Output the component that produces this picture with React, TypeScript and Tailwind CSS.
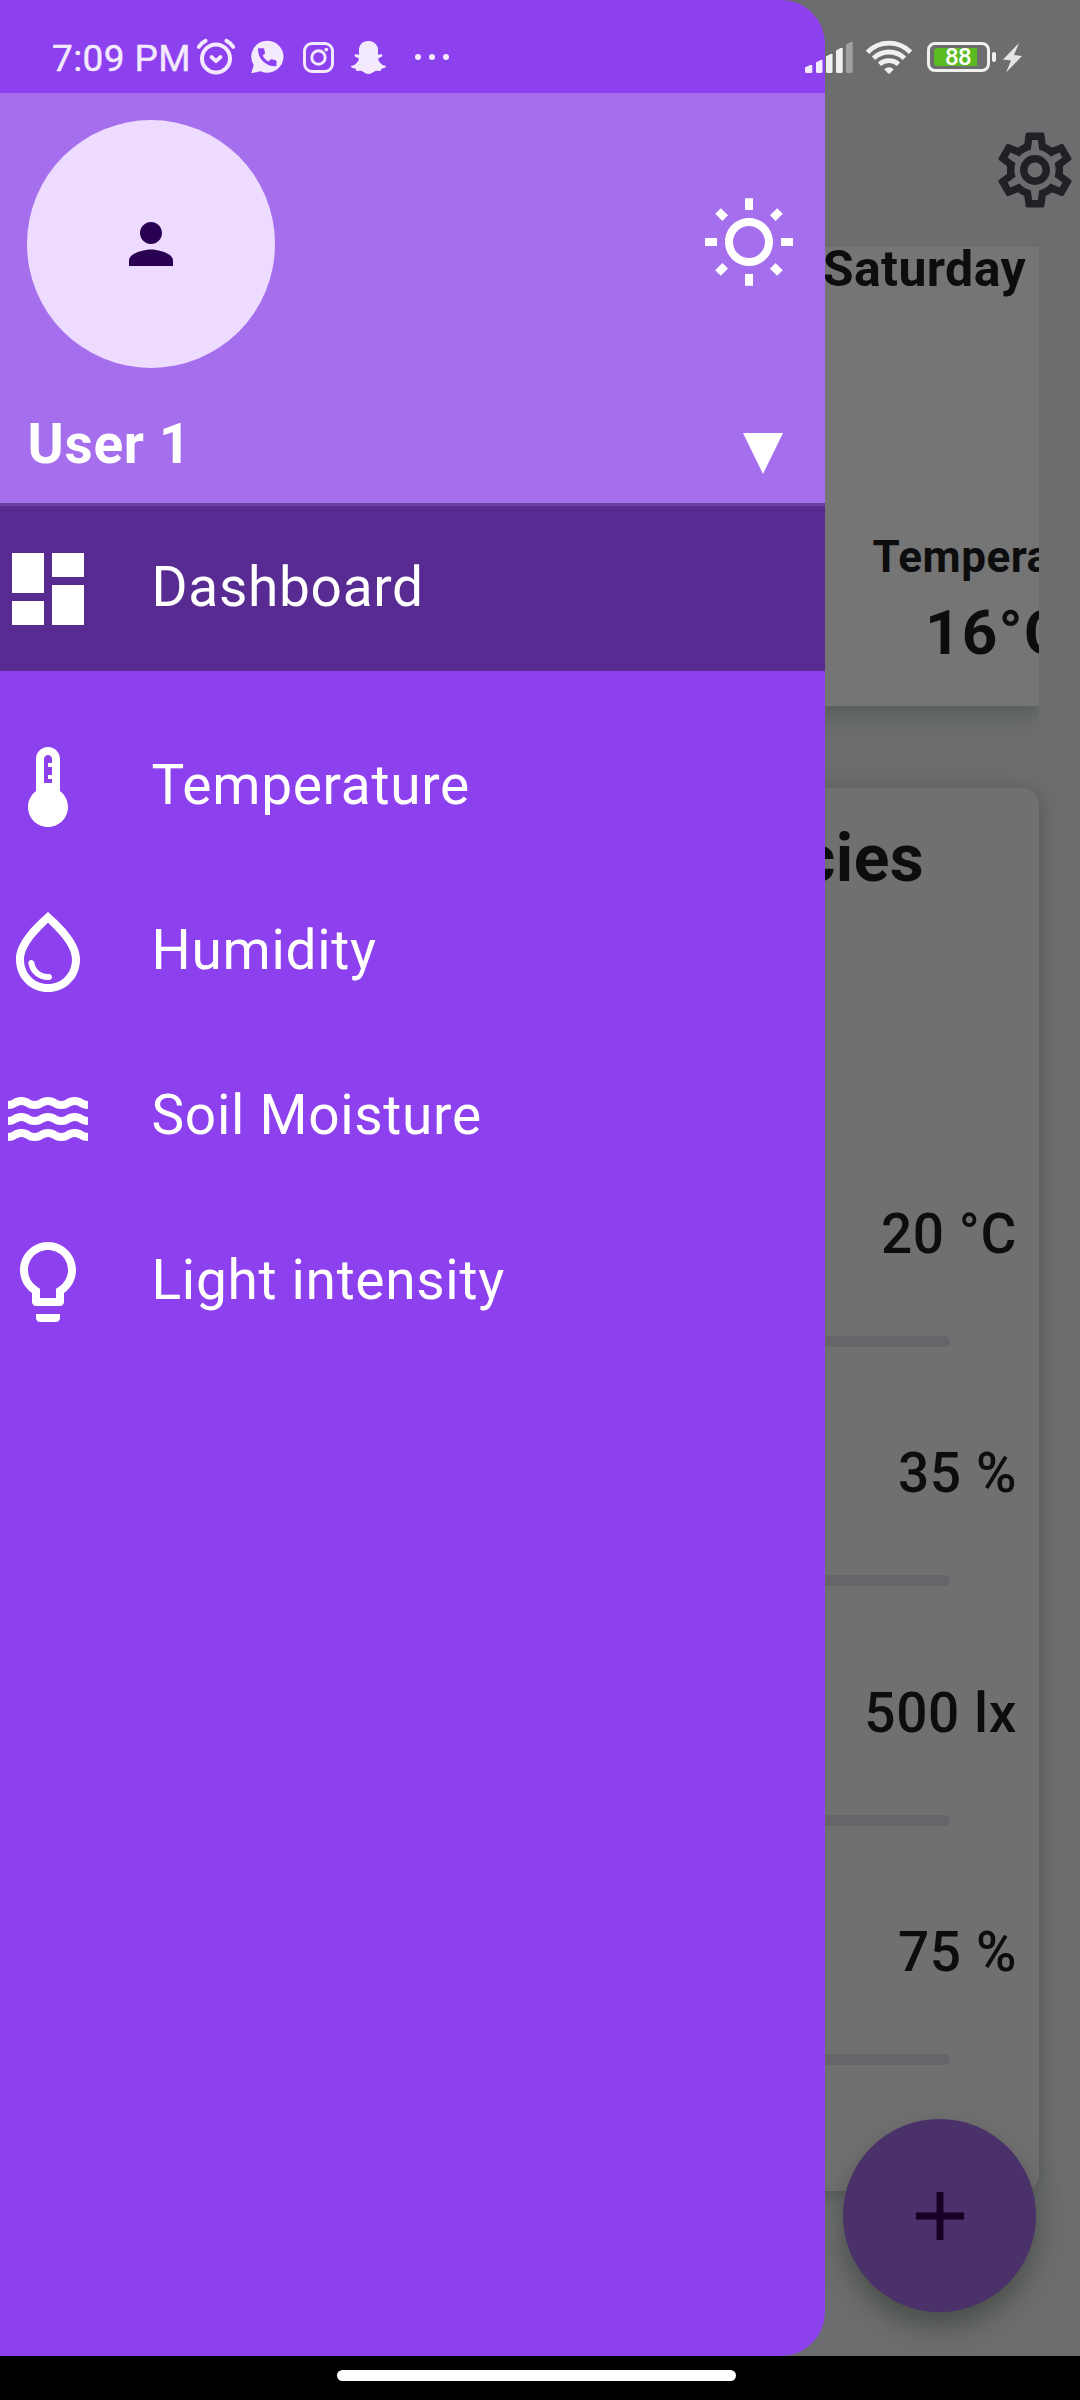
import React from "react";
import {
  MdDashboard,
  MdThermostat,
  MdOutlineWaterDrop,
  MdWater,
  MdOutlineLightbulb,
  MdOutlineWbSunny,
  MdPerson,
} from "react-icons/md";
import { FaSnapchatGhost } from "react-icons/fa";
import type { IconType } from "react-icons";

const COG =
  "M12,8A4,4 0 0,1 16,12A4,4 0 0,1 12,16A4,4 0 0,1 8,12A4,4 0 0,1 12,8M12,10A2,2 0 0,0 10,12A2,2 0 0,0 12,14A2,2 0 0,0 14,12A2,2 0 0,0 12,10M10,22C9.75,22 9.54,21.82 9.5,21.58L9.13,18.93C8.5,18.68 7.96,18.34 7.44,17.94L4.95,18.95C4.73,19.03 4.46,18.95 4.34,18.73L2.34,15.27C2.21,15.05 2.27,14.78 2.46,14.63L4.57,12.97L4.5,12L4.57,11L2.46,9.37C2.27,9.22 2.21,8.95 2.34,8.73L4.34,5.27C4.46,5.05 4.73,4.96 4.95,5.05L7.44,6.05C7.96,5.66 8.5,5.32 9.13,5.07L9.5,2.42C9.54,2.18 9.75,2 10,2H14C14.25,2 14.46,2.18 14.5,2.42L14.87,5.07C15.5,5.32 16.04,5.66 16.56,6.05L19.05,5.05C19.27,4.96 19.54,5.05 19.66,5.27L21.66,8.73C21.79,8.95 21.73,9.22 21.54,9.37L19.43,11L19.5,12L19.43,13L21.54,14.63C21.73,14.78 21.79,15.05 21.66,15.27L19.66,18.73C19.54,18.95 19.27,19.04 19.05,18.95L16.56,17.95C16.04,18.34 15.5,18.68 14.87,18.93L14.5,21.58C14.46,21.82 14.25,22 14,22H10M11.25,4L10.88,6.61C9.68,6.86 8.62,7.5 7.85,8.39L5.44,7.35L4.69,8.65L6.8,10.2C6.4,11.37 6.4,12.64 6.8,13.8L4.68,15.36L5.43,16.66L7.86,15.62C8.63,16.5 9.68,17.14 10.87,17.38L11.24,20H12.76L13.13,17.39C14.32,17.14 15.37,16.5 16.14,15.62L18.57,16.66L19.32,15.36L17.2,13.81C17.6,12.64 17.6,11.37 17.2,10.2L19.31,8.65L18.56,7.35L16.15,8.39C15.38,7.5 14.32,6.86 13.12,6.62L12.75,4H11.25Z";

function AlarmIcon() {
  return (
    <svg className="h-[40px] w-[40px]" viewBox="0 0 40 40" fill="none" stroke="currentColor" strokeLinecap="round">
      <circle cx="20" cy="21.5" r="14" strokeWidth="4" />
      <path d="M15.5 20l4.5 4.2 4.5-4.2" strokeWidth="3.8" strokeLinejoin="round" />
      <path d="M2.8 9.8Q5.5 6 9.6 3.8M37.2 9.8Q34.5 6 30.4 3.8" strokeWidth="4" />
    </svg>
  );
}

function WhatsAppIcon() {
  return (
    <svg className="h-[34px] w-[34px]" viewBox="0 0 34 34" fill="currentColor">
      <path
        fillRule="evenodd"
        d="M17.5.7a16 16 0 1 1-6.8 30.5L1.3 33.3l2.4-8.3A16 16 0 0 1 17.5.7zM8 9.2C7.8 18.5 15.500 26.500 25.500 26.300c.7 0 1-.3 1-1v-4c0-.6-.3-.9-.8-1.100l-4.300-.9c-.5-.1-.8 0-1.100.4l-1.600 1.900c-2.800-1.300-4.700-3.200-6-6l1.900-1.600c.4-.3.5-.7.4-1.100L14.200 9c-.1-.5-.4-.8-.9-.8H9c-.6 0-1 .4-1 1z"
      />
    </svg>
  );
}

function InstagramIcon() {
  return (
    <svg className="h-[31px] w-[31px]" viewBox="0 0 31 31" fill="none" stroke="currentColor" strokeWidth="2.900">
      <rect x="1.500" y="1.500" width="28" height="28" rx="7.500" />
      <circle cx="15.500" cy="15.500" r="6.700" />
      <circle cx="23.300" cy="7.600" r="1.900" fill="currentColor" stroke="none" />
    </svg>
  );
}

function StatusBar() {
  return (
    <div className="absolute inset-x-0 top-0 flex h-[93px] items-start text-[#f4eafd]">
      <span className="ml-[52px] mt-[38px] w-[144px] whitespace-nowrap text-[37px] leading-[42px] tracking-[0.4px] [-webkit-text-stroke:0.4px_#f4eafd]">7:09 PM</span>
      <div className="mt-[37px]">
        <AlarmIcon />
      </div>
      <div className="ml-[14px] mt-[40px]">
        <WhatsAppIcon />
      </div>
      <div className="ml-[18.500px] mt-[41.500px]">
        <InstagramIcon />
      </div>
      <FaSnapchatGhost className="ml-[17px] mt-[40px] h-[35px] w-[35px]" />
      <div className="ml-[29px] mt-[54px] flex gap-[8px]">
        <i className="h-[6px] w-[6px] rounded-full bg-current" />
        <i className="h-[6px] w-[6px] rounded-full bg-current" />
        <i className="h-[6px] w-[6px] rounded-full bg-current" />
      </div>
      <svg className="ml-auto mt-[42px] h-[31px] w-[48px]" viewBox="0 0 48 31">
        <g fill="#f0f0f0">
          <path d="M0 29.500V25.500L5 23h2.300v6.500q0 1.500-1.500 1.500H1.500Q0 31 0 29.500z" fill="#f4eafd" />
          <path d="M11 29.500V20.500L15.500 18H17.500v11.500q0 1.500-1.500 1.500H12.500q-1.500 0-1.500-1.500z" fill="#f4eafd" />
          <path d="M21 29.500V14.500L25.500 12H27.500v17.500q0 1.500-1.500 1.500H22.500q-1.500 0-1.500-1.500z" />
          <path d="M31 29.500V8.500L35.500 6H37.700v23.500q0 1.500-1.500 1.500H32.500q-1.500 0-1.500-1.500z" />
        </g>
        <path d="M41 29.500V2.500L45.500 0H47.700v29.500q0 1.500-1.500 1.500H42.500q-1.500 0-1.500-1.500z" fill="#a0a0a0" />
      </svg>
      <svg className="ml-[13px] mt-[40px] h-[34px] w-[46px]" viewBox="0 0 46 34" fill="none" stroke="#f0f0f0" strokeWidth="4.800">
        <path d="M1.500 12.200Q10.500 3.200 23 3.200T44.500 12.200" />
        <path d="M7.500 18.200Q14 12 23 12T38.500 18.200" />
        <path d="M13.500 24.200Q17.500 20.600 23 20.600T32.500 24.200" />
        <path d="M18.200 29.300Q23 25 27.800 29.300L24 33.300q-1 .8-2 0z" fill="#f0f0f0" stroke="none" />
      </svg>
      <div className="ml-[15px] mt-[42px] flex h-[30px] w-[63px] items-center rounded-[8px] border-[3px] border-[#f0f0f0] pl-[4px]">
        <div className="flex h-[18px] w-[43px] items-center rounded-l-[3px] bg-[#59bb20] pl-[11px] text-[24px] font-medium leading-[18px] tracking-[-0.6px] text-white">
          88
        </div>
      </div>
      <i className="ml-[2px] mt-[52px] h-[10px] w-[4px] rounded-[2px] bg-[#f0f0f0]" />
      <svg className="ml-[7px] mr-[58px] mt-[43px] h-[30px] w-[19px]" viewBox="0 0 19 30" fill="#e4e4e4">
        <path d="M16 0L0 16.500l8 1L3 29.500 19 13l-8-1z" />
      </svg>
    </div>
  );
}

const ITEMS: { label: string; Icon: IconType }[] = [
  { label: "Temperature", Icon: MdThermostat },
  { label: "Humidity", Icon: MdOutlineWaterDrop },
  { label: "Soil Moisture", Icon: MdWater },
  { label: "Light intensity", Icon: MdOutlineLightbulb },
];

function NavItem({ label, Icon }: { label: string; Icon: IconType }) {
  return (
    <div className="flex h-[165px] items-center">
      <Icon className="h-[96px] w-[96px]" />
      <span className="ml-[55.500px] pb-[2.500px] text-[55px] leading-[64px] tracking-[0.7px]">{label}</span>
    </div>
  );
}

function Drawer() {
  return (
    <aside className="absolute left-0 top-0 flex h-[2356px] w-[825px] flex-col overflow-hidden rounded-r-[44px] bg-[#8d40ed] pt-[93px] text-white">
      <header className="h-[410px] bg-[#a56eed] pl-[27px]">
        <div className="flex items-start justify-between pr-[28px] pt-[27px]">
          <div className="flex h-[248px] w-[248px] items-center justify-center rounded-full bg-[#eddcff] text-[#2a0052]">
            <MdPerson className="h-[66px] w-[66px]" />
          </div>
          <MdOutlineWbSunny className="mt-[76px] h-[96px] w-[96px]" />
        </div>
        <div className="mt-[44px] flex items-start justify-between pr-[42px]">
          <span className="ml-[0.500px] text-[55px] font-bold leading-[64px] tracking-[0.7px]">User 1</span>
          <svg className="mt-[21px] h-[41px] w-[40px]" viewBox="0 0 40 41" fill="currentColor">
            <path d="M0 0H40L20 41z" />
          </svg>
        </div>
      </header>
      <div className="h-[3px] border-b border-[#7443b2] bg-[#63409a]" />
      <nav>
        <div className="mb-[33px] bg-[#582b92]">
          <NavItem label="Dashboard" Icon={MdDashboard} />
        </div>
        {ITEMS.map((item) => (
          <NavItem key={item.label} {...item} />
        ))}
      </nav>
    </aside>
  );
}

const READINGS = ["20 °C", "35 %", "500 lx", "75 %"];

function Page() {
  return (
    <main className="flex h-[2356px] flex-col bg-[#6c6d6f] text-[#0d0d0e]">
      <div className="flex h-[247px] justify-end pr-[0.500px] pt-[125px]">
        <svg className="h-[90px] w-[90px]" viewBox="0 0 24 24" fill="#222025">
          <path d={COG} />
        </svg>
      </div>
      <div className="mr-[41px] h-[493px] overflow-hidden">
        <section className="h-[459px] bg-[#757575] font-bold shadow-[0_8px_20px_rgba(70,80,70,0.55)]">
          <div className="pr-[13px] text-right text-[50px] leading-[44px] tracking-[0.4px]">Saturday</div>
          <div className="ml-[872.500px] mt-[240px] whitespace-nowrap text-[44px] leading-[52px] tracking-[0.5px]">Temperature</div>
          <div className="ml-[925px] mt-[14px] whitespace-nowrap text-[62px] leading-[72px] tracking-[1.2px]">16°C</div>
        </section>
      </div>
      <section className="ml-[41px] mr-[41px] mt-[48px] h-[1403px] rounded-[16px] bg-[#707070] pt-[32px] shadow-[0_4px_20px_rgba(70,75,70,0.7)]">
        <h2 className="pr-[115px] text-right text-[66px] font-bold leading-[78px] tracking-[0.4px]">cies</h2>
        <div className="mt-[304px] flex flex-col gap-[94.300px]">
          {READINGS.map((value, i) => (
            <div key={i}>
              <div className="pr-[22px] text-right text-[55px] font-medium leading-[64px] tracking-[0.6px]">{value}</div>
              <div className="mr-[89px] mt-[70px] h-[11px] rounded-full bg-[#67656a]" />
            </div>
          ))}
        </div>
      </section>
    </main>
  );
}

export default function App() {
  return (
    <div className="relative h-[2400px] w-[1080px] overflow-hidden bg-black font-[Roboto,sans-serif]">
      <Page />
      <button className="absolute left-[843px] top-[2119px] flex h-[193px] w-[193px] items-center justify-center rounded-full bg-[#4b3169] shadow-[0_14px_26px_rgba(70,75,70,0.9)]">
        <svg className="h-[48px] w-[48px]" viewBox="0 0 48 48" fill="#160024">
          <path d="M20.500 0h7v20.500H48v7H27.500V48h-7V27.500H0v-7h20.500z" />
        </svg>
      </button>
      <Drawer />
      <StatusBar />
      <footer className="flex h-[44px] items-start bg-black pl-[337px] pt-[14px]">
        <div className="h-[11px] w-[399px] rounded-full bg-white" />
      </footer>
    </div>
  );
}
